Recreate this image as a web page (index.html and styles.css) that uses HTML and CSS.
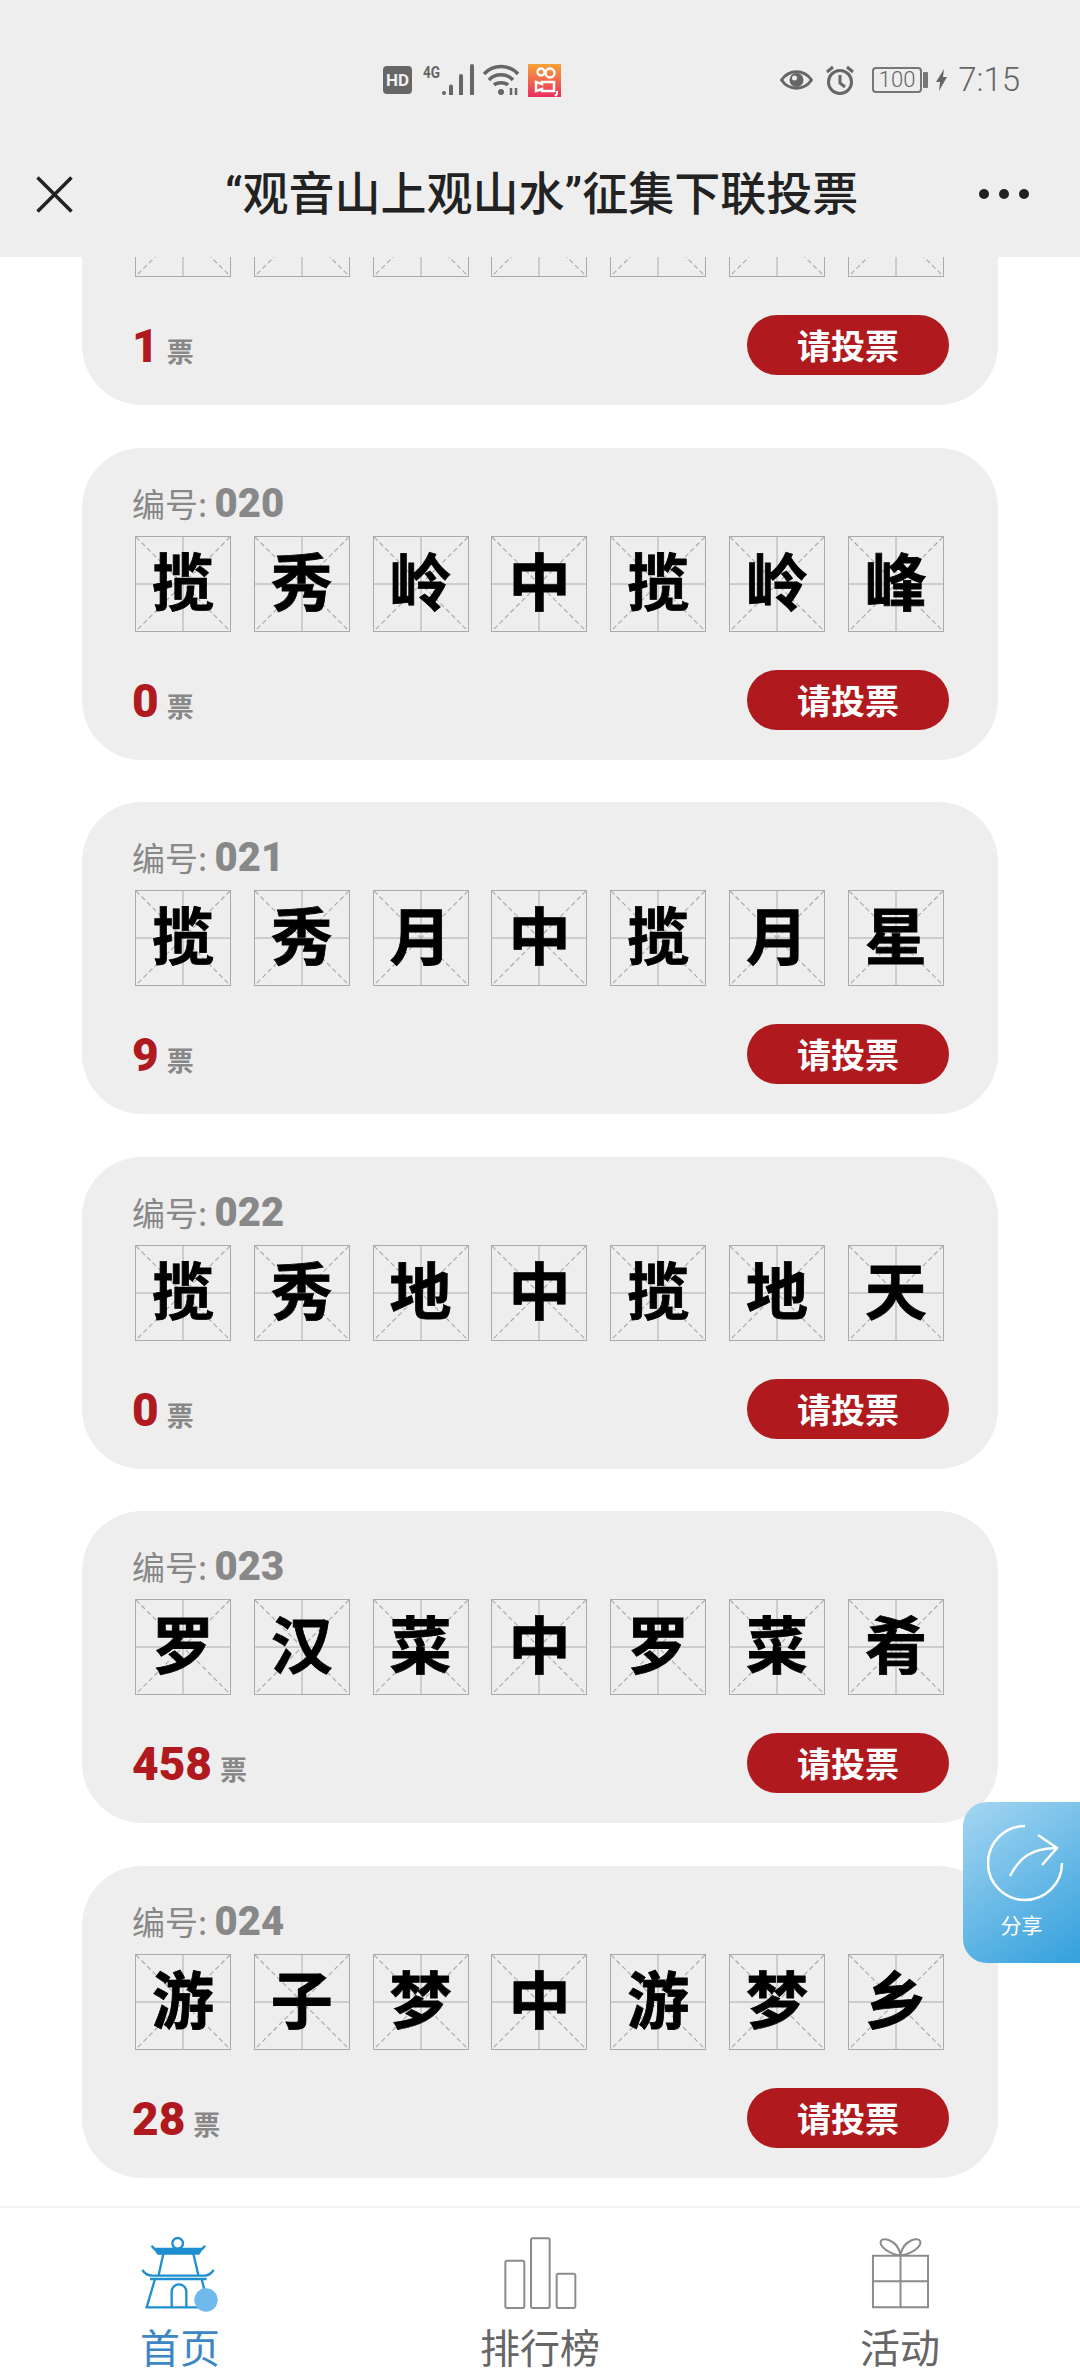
FILE: index.html
```html
<!DOCTYPE html>
<html lang="zh-CN">
<head>
    <meta charset="UTF-8">
    <meta name="viewport" content="width=device-width, initial-scale=1.0">
    <title>“观音山上观山水”征集下联投票</title>
    <link rel="stylesheet" href="styles.css">
</head>
<body>
    <header class="top">
        <div class="status">
            <div class="status-left">
                <span class="hd">HD</span>
                <span class="net">4G</span>
                <svg class="signal" width="32" height="32" viewBox="0 0 32 32"><circle cx="3" cy="29" r="2"/><path d="M8 22.500a2 2 0 0 1 4 0V31H8zM18 12a2 2 0 0 1 4 0v19h-4zM29 2a2 2 0 0 1 4 0v29h-4z"/></svg>
                <svg class="wifi" width="36" height="32" viewBox="0 0 36 32"><path d="M1 10C10 0 26 0 35 10M6 16C12 9 24 9 30 16M11 21C14 18 22 18 25 21"/><circle cx="18" cy="28" r="3"/><path class="wifi-arrows" d="M28 24v7M33 24v7"/></svg>
                <svg class="app" width="33" height="33" viewBox="0 0 33 33">
                    <defs><linearGradient id="appBg" x1="0" y1="0" x2="0" y2="1"><stop offset="0" stop-color="#f6a336"/><stop offset="1" stop-color="#e92f62"/></linearGradient></defs>
                    <rect width="33" height="33" fill="url(#appBg)"/>
                    <circle cx="13" cy="8" r="3.500" fill="none" stroke="#fff" stroke-width="2.500"/>
                    <circle cx="22" cy="9" r="4.500" fill="none" stroke="#fff" stroke-width="2.500"/>
                    <path d="M14 18h12v9H14v-2l-6 2v-9l6 2z" fill="none" stroke="#fff" stroke-width="2.500"/>
                    <path d="M29 27v3l-2 2" fill="none" stroke="#fff" stroke-width="2"/>
                </svg>
            </div>
            <div class="status-right">
                <svg class="eye" width="33" height="24" viewBox="0 0 33 24"><path d="M1.500 12C9 1 24 1 31.500 12 24 23 9 23 1.500 12z"/><circle cx="16.500" cy="12" r="7" fill="#666" stroke="none"/><circle cx="14.500" cy="10" r="2.500" fill="#eee" stroke="none"/></svg>
                <svg class="clock" width="30" height="30" viewBox="0 0 30 30"><circle cx="15" cy="17" r="11.500"/><path d="M15 10v8l5 4M2 7l6-5M28 7l-6-5"/></svg>
                <div class="battery"><span>100</span></div>
                <svg class="bolt" width="11" height="22" viewBox="0 0 11 22"><path d="M8 0L0 13h4l-1 9 8-14H7z"/></svg>
                <span class="time">7:15</span>
            </div>
        </div>
        <div class="titlebar">
            <svg class="close" width="37" height="37" viewBox="0 0 37 37"><path d="M1.500 1.500l34 34M35.500 1.500l-34 34"/></svg>
            <h1>“观音山上观山水”征集下联投票</h1>
            <div class="more"><i></i><i></i><i></i></div>
        </div>
    </header>

    <main class="content">
        <div class="list">
            <section class="card">
                <div class="num"></div>
                <div class="couplet"><span></span><span></span><span></span><span></span><span></span><span></span><span></span></div>
                <div class="foot"><div class="votes"><b>1</b>票</div><button>请投票</button></div>
            </section>
            <section class="card">
                <div class="num">编号: <b>020</b></div>
                <div class="couplet"><span>揽</span><span>秀</span><span>岭</span><span>中</span><span>揽</span><span>岭</span><span>峰</span></div>
                <div class="foot"><div class="votes"><b>0</b>票</div><button>请投票</button></div>
            </section>
            <section class="card">
                <div class="num">编号: <b>021</b></div>
                <div class="couplet"><span>揽</span><span>秀</span><span>月</span><span>中</span><span>揽</span><span>月</span><span>星</span></div>
                <div class="foot"><div class="votes"><b>9</b>票</div><button>请投票</button></div>
            </section>
            <section class="card">
                <div class="num">编号: <b>022</b></div>
                <div class="couplet"><span>揽</span><span>秀</span><span>地</span><span>中</span><span>揽</span><span>地</span><span>天</span></div>
                <div class="foot"><div class="votes"><b>0</b>票</div><button>请投票</button></div>
            </section>
            <section class="card">
                <div class="num">编号: <b>023</b></div>
                <div class="couplet"><span>罗</span><span>汉</span><span>菜</span><span>中</span><span>罗</span><span>菜</span><span>肴</span></div>
                <div class="foot"><div class="votes"><b>458</b>票</div><button>请投票</button></div>
            </section>
            <section class="card">
                <div class="num">编号: <b>024</b></div>
                <div class="couplet"><span>游</span><span>子</span><span>梦</span><span>中</span><span>游</span><span>梦</span><span>乡</span></div>
                <div class="foot"><div class="votes"><b>28</b>票</div><button>请投票</button></div>
            </section>
        </div>
    </main>

    <div class="share">
        <svg width="78" height="78" viewBox="0 0 78 78"><path d="M38 2A37 37 0 1 0 75 39"/><path d="M23 52C33 33 44 25 68 24M51 11L70 24 55 41"/></svg>
        <span>分享</span>
    </div>

    <nav class="tabs">
        <div class="tab active">
            <svg width="80" height="77" viewBox="120 130 240 231">
                <circle cx="233" cy="155" r="16"/>
                <path d="M155 162c6 10 14 15 25 16h110c11-1 19-6 25-16"/>
                <path class="solid" d="M165 172h140l-9 14H174z"/>
                <path d="M190 186l-14 64M280 186l15 64"/>
                <path d="M127 235c8 12 17 17 30 17h156c13 0 20-5 28-17"/>
                <path d="M150 262h170"/>
                <path d="M165 262l-25 85h186l-21-85"/>
                <path d="M215 347v-47a22 22 0 0 1 44 0v47"/>
                <circle class="dot" cx="318" cy="325" r="35"/>
            </svg>
            <span>首页</span>
        </div>
        <div class="tab">
            <svg width="77" height="77" viewBox="1205 136 231 231">
                <rect x="1215" y="213" width="57" height="142" rx="5"/>
                <rect x="1292" y="146" width="56" height="209" rx="5"/>
                <rect x="1369" y="252" width="56" height="103" rx="5"/>
            </svg>
            <span>排行榜</span>
        </div>
        <div class="tab">
            <svg width="73" height="77" viewBox="730 136 220 231">
                <path d="M757 198h166v155H757zM840 198v155M757 275h166"/>
                <path d="M840 196c-22 0-60-20-60-38 0-20 50-10 60 36 10-46 60-56 60-36 0 18-38 38-60 38z"/>
            </svg>
            <span>活动</span>
        </div>
    </nav>
</body>
</html>
```

FILE: styles.css
```css
* {
    box-sizing: border-box;
}
html, body {
    margin: 0;
    height: 100%;
}
body {
    position: relative;
    display: flex;
    flex-direction: column;
    height: 2376px;
    overflow: hidden;
    background: #fff;
    font-family: "Noto Sans CJK SC", "Noto Sans", sans-serif;
}

/* top bar */
.top {
    position: relative;
    z-index: 2;
    flex: none;
    height: 257px;
    background: #eee;
}
.status {
    display: flex;
    justify-content: space-between;
    align-items: center;
    height: 34px;
    margin-top: 63px;
    padding: 0 60px 0 383px;
    color: #666;
}
.status-left, .status-right {
    display: flex;
    align-items: center;
}
.hd {
    width: 29px;
    height: 28px;
    border-radius: 4px;
    background: #666;
    color: #eee;
    font: 700 17px/28px "Roboto", sans-serif;
    text-align: center;
}
.net {
    align-self: flex-start;
    width: 18px;
    margin-left: 11px;
    font: 700 17px/17px "Roboto", sans-serif;
    white-space: nowrap;
    transform: scaleX(0.8);
    transform-origin: left top;
}
.signal {
    flex: none;
    margin-left: 0;
    overflow: visible;
    fill: #666;
}
.wifi {
    margin-left: 10px;
    fill: #666;
    stroke: #666;
    stroke-width: 3.500;
}
.wifi path {
    fill: none;
}
.wifi circle {
    stroke: none;
}
.wifi .wifi-arrows {
    stroke-width: 2.500;
}
.app {
    margin-left: 9px;
}
.eye, .clock {
    fill: none;
    stroke: #666;
    stroke-width: 3;
}
.clock {
    margin-left: 12px;
}
.battery {
    position: relative;
    width: 50px;
    height: 26px;
    margin-left: 17px;
    border: 2px solid #777;
    border-radius: 4px;
    color: #666;
    font: 300 22px/22px "Roboto", sans-serif;
    text-align: center;
}
.battery::after {
    content: "";
    position: absolute;
    right: -8px;
    top: 3px;
    width: 5px;
    height: 16px;
    border-radius: 1px;
    background: #777;
}
.bolt {
    margin-left: 14px;
    fill: #666;
}
.time {
    margin-left: 11px;
    font: 300 33px/34px "Roboto", sans-serif;
}
.titlebar {
    display: flex;
    align-items: center;
    height: 60px;
    margin-top: 67px;
    padding: 0 51px 0 36px;
}
.close {
    flex: none;
    fill: none;
    stroke: #222;
    stroke-width: 3.500;
}
.titlebar h1 {
    margin: 0 0 0 152px;
    color: #222;
    font: 500 46px/60px "Roboto", "Noto Sans CJK SC", sans-serif;
}
.more {
    display: flex;
    gap: 10px;
    margin-left: auto;
}
.more i {
    width: 10px;
    height: 10px;
    border-radius: 50%;
    background: #222;
}

/* list of couplets */
.content {
    flex: 1;
    overflow: hidden;
}
.list {
    display: flex;
    flex-direction: column;
    gap: 42.500px;
    margin-top: -164px;
    padding: 0 82px;
}
.card {
    height: 312px;
    padding: 34px 49px 0 50px;
    border-radius: 60px;
    background: #eee;
}
.num {
    height: 54px;
    color: #888;
    font-size: 33px;
    line-height: 42px;
}
.num b {
    font: 900 40px/42px "Roboto", sans-serif;
}
.couplet {
    display: flex;
    gap: 22.800px;
    margin-left: 3px;
}
.couplet span {
    width: 96px;
    height: 96px;
    border: 1px solid #aaa;
    background: url("data:image/svg+xml,%3Csvg xmlns='http://www.w3.org/2000/svg' viewBox='0 0 96 96'%3E%3Cpath d='M48 0v96M0 48h96' stroke='%23aaa' stroke-width='1'/%3E%3Cpath d='M0 0l96 96M96 0L0 96' stroke='%23aaa' stroke-width='1.200' stroke-dasharray='5 3'/%3E%3C/svg%3E") center / 100% 100% no-repeat;
    color: #000;
    font-size: 62px;
    font-weight: 700;
    line-height: 85px;
    text-align: center;
    -webkit-text-stroke: 0.8px #000;
}
.foot {
    display: flex;
    justify-content: space-between;
    align-items: flex-start;
    margin-top: 38px;
}
.votes {
    margin-top: 1px;
    color: #888;
    font-size: 27px;
    font-weight: 700;
    line-height: 60px;
}
.votes b {
    margin-right: 8px;
    color: #b01a1e;
    font: 900 46px/60px "Roboto", sans-serif;
}
.foot button {
    width: 202px;
    height: 60px;
    padding: 0;
    border: none;
    border-radius: 30px;
    background: #b01a1e;
    color: #fff;
    font: 700 34px/60px "Noto Sans CJK SC", sans-serif;
}

/* floating share */
.share {
    position: absolute;
    right: 0;
    top: 1802px;
    z-index: 1;
    display: flex;
    flex-direction: column;
    align-items: center;
    width: 117px;
    height: 161px;
    padding-top: 22px;
    border-radius: 24px 0 0 24px;
    background: linear-gradient(145deg, #a5d6f2, #33a0dc);
    color: #fff;
}
.share svg {
    margin-left: 8px;
    fill: none;
    stroke: #fff;
    stroke-width: 2.500;
}
.share span {
    margin-top: 6px;
    font-size: 21px;
    line-height: 32px;
}

/* bottom tabs */
.tabs {
    flex: none;
    display: grid;
    grid-template-columns: repeat(3, 1fr);
    height: 170px;
    overflow: hidden;
    border-top: 2px solid #f2f2f2;
    background: #fff;
}
.tab {
    display: flex;
    flex-direction: column;
    align-items: center;
    padding-top: 27px;
    color: #666;
    font-size: 40px;
    line-height: 56px;
}
.tab span {
    margin-top: 6px;
}
.tab svg {
    flex: none;
    fill: none;
    stroke: #8c8c8c;
    stroke-width: 6;
}
.tab.active {
    color: #3d86c6;
}
.tab.active svg {
    stroke: #1f8fd0;
    stroke-width: 7;
}
.tab.active .solid {
    fill: #1f8fd0;
}
.tab.active .dot {
    fill: #6fb9ec;
    stroke: none;
}
```
